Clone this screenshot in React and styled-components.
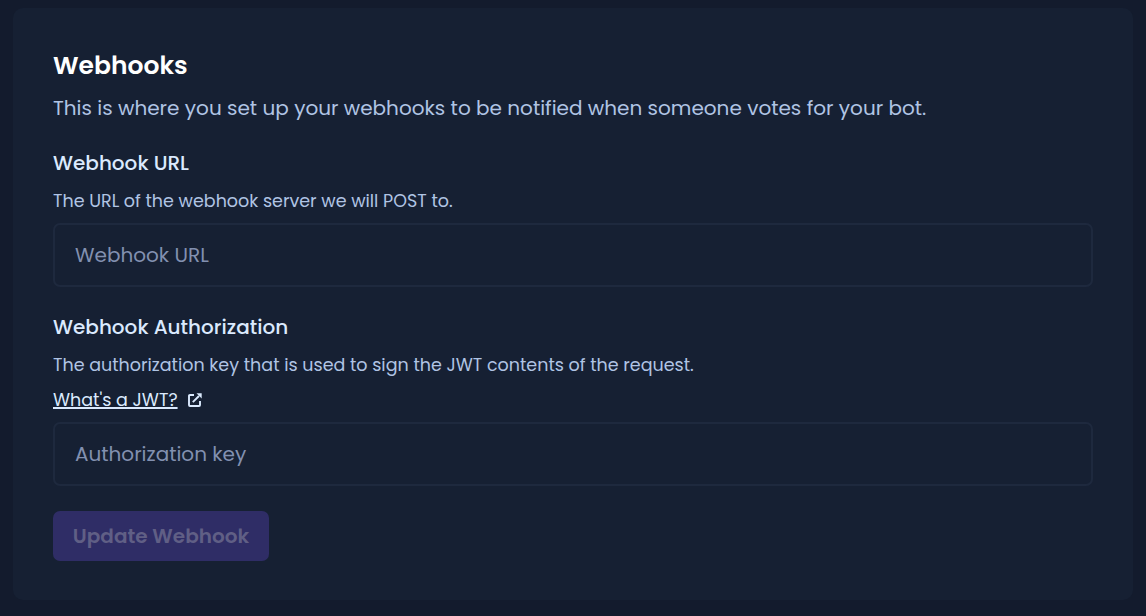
import React from "react";
import styled, { createGlobalStyle } from "styled-components";

const GlobalStyle = createGlobalStyle`
  *, *::before, *::after { box-sizing: border-box; }
  body {
    margin: 0;
    background: #131b2d;
    font-family: Poppins, Inter, "Open Sans", sans-serif;
  }
`;

const Page = styled.main`
  height: 616px;
  padding: 8px 13px 15px;
`;

const Card = styled.section`
  height: 592px;
  padding: 41px 40px 0;
  border-radius: 10px;
  background: #162033;
`;

const Title = styled.h2`
  margin: 0;
  font-size: 25px;
  line-height: 34px;
  font-weight: 600;
  color: #fff;
`;

const Intro = styled.p`
  margin: 8px 0 0;
  font-size: 20px;
  line-height: 34px;
  white-space: nowrap;
  color: #b0c4e4;
`;

const Field = styled.div`
  display: flex;
  flex-direction: column;
  align-items: flex-start;
  margin-top: 24px;

  & + & {
    margin-top: 26px;
  }
`;

const Label = styled.label`
  font-size: 20px;
  line-height: 28px;
  font-weight: 500;
  color: #dbeafe;
`;

const Hint = styled.p`
  margin: 10px 0 0;
  font-size: 17.5px;
  line-height: 28px;
  white-space: nowrap;
  color: #b0c4e4;
`;

const HelpLink = styled.a`
  display: flex;
  align-items: center;
  gap: 10px;
  height: 28px;
  margin-top: 7px;
  color: #dbeafe;
  font-size: 17.5px;
  line-height: 28px;
`;

const HelpText = styled.span`
  text-decoration: underline;
  text-decoration-thickness: 1px;
  text-underline-offset: 2px;
`;

const ExternalIcon = styled.svg`
  display: block;
  width: 14px;
  height: 14px;
  fill: none;
  stroke: currentColor;
  stroke-width: 1.9;
`;

const Input = styled.input`
  width: 100%;
  height: 64px;
  margin-top: 8px;
  padding: 0 20px;
  border: 2px solid #1e293e;
  border-radius: 7px;
  background: transparent;
  color: #dbeafe;
  font-family: inherit;
  font-size: 20px;
  outline: none;

  &::placeholder {
    color: #8290b0;
    opacity: 1;
  }
`;

const SubmitButton = styled.button`
  width: 216px;
  height: 50px;
  margin-top: 25px;
  padding: 0;
  border: 0;
  border-radius: 7px;
  background: #2f2d66;
  color: #605f85;
  font-family: inherit;
  font-size: 20px;
  font-weight: 600;
  white-space: nowrap;
`;

export default function App() {
  return (
    <>
      <GlobalStyle />
      <Page>
        <Card>
          <Title>Webhooks</Title>
          <Intro>
            This is where you set up your webhooks to be notified when someone votes for your bot.
          </Intro>
          <Field>
            <Label htmlFor="url">Webhook URL</Label>
            <Hint>The URL of the webhook server we will POST to.</Hint>
            <Input id="url" placeholder="Webhook URL" />
          </Field>
          <Field>
            <Label htmlFor="key">Webhook Authorization</Label>
            <Hint>
              The authorization key that is used to sign the JWT contents of the request.
            </Hint>
            <HelpLink href="#jwt">
              <HelpText>What's a JWT?</HelpText>
              <ExternalIcon viewBox="0 0 14 14" aria-hidden="true">
                <path d="M6 2H2Q1 2 1 3V12Q1 13 2 13H11Q12 13 12 12V8" />
                <path d="M4.8 9.2L11 3" />
                <path d="M8.5 .3H13.7V5.5Z" fill="currentColor" stroke="none" />
              </ExternalIcon>
            </HelpLink>
            <Input id="key" placeholder="Authorization key" />
          </Field>
          <SubmitButton disabled>Update Webhook</SubmitButton>
        </Card>
      </Page>
    </>
  );
}
